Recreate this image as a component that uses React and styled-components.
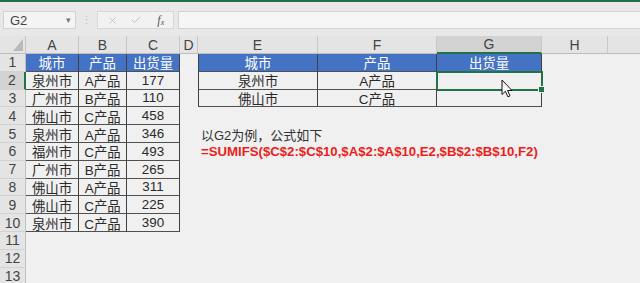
import React from "react";
import styled, { createGlobalStyle } from "styled-components";
import { X, Check } from "lucide-react";

const GlobalStyle = createGlobalStyle`
  html, body { margin: 0; padding: 0; background: #f0f0f0; }
  body { font-family: "Liberation Sans", "Noto Sans CJK SC", sans-serif; }
`;

const COLS = [
  ["A", 53], ["B", 48], ["C", 53], ["D", 18], ["E", 120],
  ["F", 119], ["G", 105], ["H", 66], ["", 40],
];

const SALES = [
  ["泉州市", "A产品", "177"],
  ["广州市", "B产品", "110"],
  ["佛山市", "C产品", "458"],
  ["泉州市", "A产品", "346"],
  ["福州市", "C产品", "493"],
  ["广州市", "B产品", "265"],
  ["佛山市", "A产品", "311"],
  ["佛山市", "C产品", "225"],
  ["泉州市", "C产品", "390"],
];

const LOOKUP = [
  ["泉州市", "A产品", ""],
  ["佛山市", "C产品", ""],
];

const HEAD = ["城市", "产品", "出货量"];
const FORMULA = "=SUMIFS($C$2:$C$10,$A$2:$A$10,E2,$B$2:$B$10,F2)";

export default function App() {
  const rows = [];
  for (let r = 1; r <= 13; r++) {
    rows.push(
      <RowHead key={"rh" + r} $active={r === 2}>{r}</RowHead>
    );
    COLS.forEach(([col], c) => {
      const key = col + r + "_" + c;
      // left table A1:C10
      if (c <= 2 && r <= 10) {
        const text = r === 1 ? HEAD[c] : SALES[r - 2][c];
        rows.push(
          <Cell key={key} $head={r === 1} $framed>{text}</Cell>
        );
        return;
      }
      // lookup table E1:G3
      if (c >= 4 && c <= 6 && r <= 3) {
        const text = r === 1 ? HEAD[c - 4] : LOOKUP[r - 2][c - 4];
        const selected = r === 2 && c === 6;
        rows.push(
          <Cell key={key} $head={r === 1} $framed $edgeLeft={c === 4} $selected={selected}>
            {text}
            {selected && <FillHandle />}
          </Cell>
        );
        return;
      }
      if (c === 4 && r === 5) {
        rows.push(<Cell key={key} $left><Note>以G2为例，公式如下</Note></Cell>);
        return;
      }
      if (c === 4 && r === 6) {
        rows.push(<Cell key={key} $left><Formula>{FORMULA}</Formula></Cell>);
        return;
      }
      rows.push(<Cell key={key} />);
    });
  }

  return (
    <Window>
      <GlobalStyle />
      <TitleStripe />
      <Toolbar>
        <NameBox>
          G2
          <Caret>▾</Caret>
        </NameBox>
        <Grip>⋮</Grip>
        <FxBox>
          <FxButton><X size={11} strokeWidth={1.6} /></FxButton>
          <FxButton><Check size={12} strokeWidth={1.6} /></FxButton>
          <FxButton $fx>f<small>x</small></FxButton>
        </FxBox>
        <FormulaInput />
      </Toolbar>
      <Sheet>
        <Corner>
          <svg width="10" height="12" viewBox="0 0 10 12">
            <polygon points="10,0 10,12 0,12" fill="#b9b9b9" />
          </svg>
        </Corner>
        {COLS.map(([col]) => (
          <ColHead key={"ch" + col} $active={col === "G"}>{col}</ColHead>
        ))}
        {rows}
      </Sheet>
      <Pointer width="12" height="19" viewBox="0 0 12 19">
        <path
          d="M1 1 V15.5 L4.4 12.3 L6.9 17.8 L9 16.9 L6.6 11.5 H11 Z"
          fill="#fff"
          stroke="#111"
          strokeWidth="1"
          strokeLinejoin="round"
        />
      </Pointer>
    </Window>
  );
}

const Window = styled.div`
  position: relative;
  width: 640px;
  height: 283px;
  overflow: hidden;
  background: #f0f0f0;
`;

const TitleStripe = styled.div`
  height: 2px;
  background: #217346;
`;

const Toolbar = styled.div`
  display: flex;
  align-items: flex-start;
  height: 34px;
  box-sizing: border-box;
  padding: 9px 0 0 3px;
  background: #e8e8e8;
`;

const NameBox = styled.div`
  display: flex;
  align-items: center;
  justify-content: space-between;
  box-sizing: border-box;
  width: 73px;
  height: 18px;
  padding: 0 4px 0 6px;
  border: 1px solid #d3d3d3;
  background: #f4f4f4;
  color: #444;
  font-size: 13px;
`;

const Caret = styled.span`
  font-size: 9px;
  color: #777;
`;

const Grip = styled.div`
  width: 21px;
  height: 18px;
  line-height: 18px;
  text-align: center;
  font-size: 11px;
  color: #c2c2c2;
`;

const FxBox = styled.div`
  display: flex;
  align-items: center;
  box-sizing: border-box;
  width: 77px;
  height: 18px;
  padding-left: 2px;
  border: 1px solid #d8d8d8;
  background: #f2f2f2;
`;

const FxButton = styled.div`
  display: flex;
  align-items: center;
  justify-content: center;
  width: 25px;
  height: 16px;
  color: ${p => (p.$fx ? "#555" : "#b5b5b5")};
  font-family: "Liberation Serif", serif;
  font-style: italic;
  font-size: 12px;

  small {
    font-size: 8px;
    margin-top: 4px;
  }
`;

const FormulaInput = styled.div`
  flex: 1;
  height: 18px;
  margin-left: 4px;
  box-sizing: border-box;
  border: 1px solid #d3d3d3;
  border-right: 0;
  background: #f6f6f6;
`;

const Sheet = styled.div`
  display: grid;
  grid-template-columns: 26px ${COLS.map(([, w]) => w + "px").join(" ")};
  grid-template-rows: 18px repeat(13, 17.8px);
  background: #f0f0f0;
`;

const Corner = styled.div`
  display: flex;
  align-items: flex-end;
  justify-content: flex-end;
  box-sizing: border-box;
  padding: 0 2px 2px 0;
  background: #e4e4e4;
  border-right: 1px solid #c4c4c4;
  border-bottom: 1px solid #bdbdbd;
`;

const ColHead = styled.div`
  display: flex;
  align-items: center;
  justify-content: center;
  box-sizing: border-box;
  background: ${p => (p.$active ? "#d3d3d3" : "#e4e4e4")};
  border-right: 1px solid #c8c8c8;
  border-bottom: ${p => (p.$active ? "2px solid #217346" : "1px solid #bdbdbd")};
  color: #444;
  font-size: 14px;
`;

const RowHead = styled.div`
  display: flex;
  align-items: center;
  justify-content: center;
  box-sizing: border-box;
  background: ${p => (p.$active ? "#d3d3d3" : "#e4e4e4")};
  border-right: ${p => (p.$active ? "2px solid #217346" : "1px solid #c0c0c0")};
  border-bottom: 1px solid #d2d2d2;
  color: #444;
  font-size: 14px;
`;

const Cell = styled.div`
  position: relative;
  display: flex;
  align-items: center;
  justify-content: ${p => (p.$left ? "flex-start" : "center")};
  box-sizing: border-box;
  min-width: 0;
  padding: 0 3px;
  white-space: nowrap;
  font-size: 13.4px;
  color: ${p => (p.$head ? "#fff" : "#2a2a2a")};
  background: ${p => (p.$head ? "#4472c4" : "transparent")};
  border-right: ${p => (p.$framed ? "1px solid #404040" : "0")};
  border-bottom: ${p => (p.$framed ? "1px solid #505050" : "0")};
  border-left: ${p => (p.$edgeLeft ? "1px solid #404040" : "0")};
  outline: ${p => (p.$selected ? "2px solid #217346" : "none")};
  outline-offset: -1px;
`;

const FillHandle = styled.span`
  position: absolute;
  right: -4px;
  bottom: -4px;
  width: 5px;
  height: 5px;
  background: #217346;
  border: 1px solid #f0f0f0;
  z-index: 2;
`;

const Note = styled.span`
  color: #333;
  font-size: 13px;
`;

const Formula = styled.span`
  color: #f01c1c;
  font-weight: bold;
  font-size: 13.2px;
`;

const Pointer = styled.svg`
  position: absolute;
  left: 501px;
  top: 79px;
`;
